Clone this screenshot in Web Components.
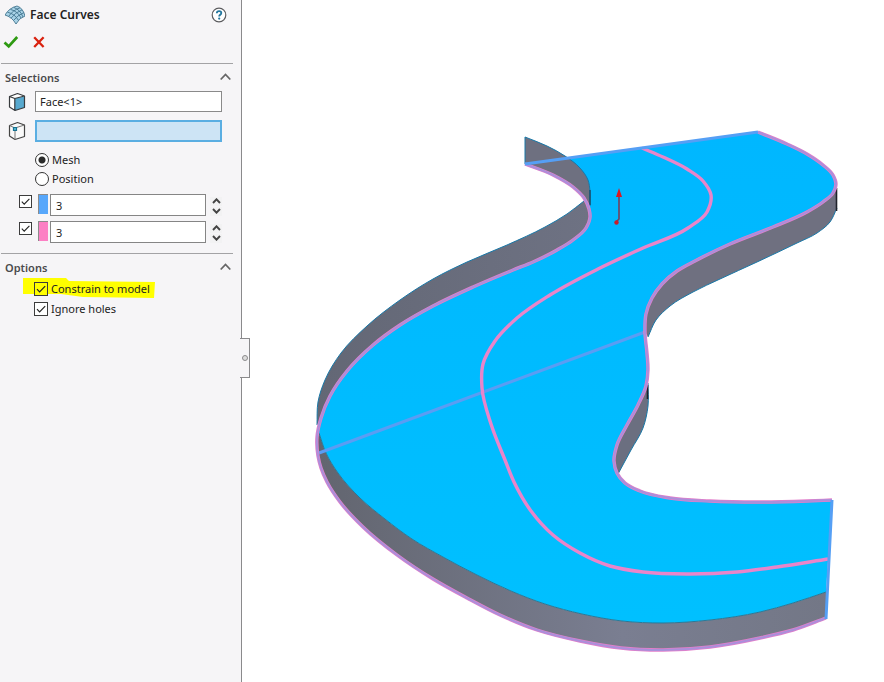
<!DOCTYPE html>
<html lang="en">
<head>
<meta charset="utf-8">
<title>Face Curves</title>
<style>
html,body{margin:0;min-height:100%;background:#fff}
body{font-family:"Noto Sans","Open Sans",sans-serif;font-size:11px;line-height:16px;color:#222}
</style>
</head>
<body>
<cad-app></cad-app>
<script>
const define = (name, html, ready) => customElements.define(name, class extends HTMLElement {
  connectedCallback() {
    if (this.shadowRoot) return;
    const root = this.attachShadow({mode: 'open'});
    const t = document.createElement('template');
    t.innerHTML = html;
    root.append(t.content.cloneNode(true));
    if (ready) ready(this, root);
  }
});

/* Smooth cubic path through a list of x,y pairs, with tangents weighted by chord length */
function curve(text, lead = 'M') {
  const p = text.trim().split(/\s+/).map(s => s.split(',').map(Number));
  const n = p.length, dist = (a, b) => Math.hypot(b[0] - a[0], b[1] - a[1]);
  const slope = (a, b, k) => (b[k] - a[k]) / dist(a, b);
  const tan = p.map((b, i) => [0, 1].map(k => {
    if (i === 0) return slope(b, p[1], k);
    if (i === n - 1) return slope(p[n - 2], b, k);
    const h1 = dist(p[i - 1], b), h2 = dist(b, p[i + 1]);
    return (slope(p[i - 1], b, k) * h2 + slope(b, p[i + 1], k) * h1) / (h1 + h2);
  }));
  let d = lead + p[0].join(',');
  for (let i = 0; i < n - 1; i++) {
    const b = p[i], c = p[i + 1], h = dist(b, c) / 3;
    d += `C${b[0] + tan[i][0] * h},${b[1] + tan[i][1] * h} ${c[0] - tan[i + 1][0] * h},${c[1] - tan[i + 1][1] * h} ${c}`;
  }
  return d;
}
const reversed = t => t.trim().split(/\s+/).reverse().join(' ');

define('check-box', `
<style>
:host{display:block}
label{display:flex;align-items:center;gap:3px}
input{appearance:none;box-sizing:border-box;flex:none;width:var(--size,14px);height:var(--size,14px);margin:0;border:1px solid #3c3c3c;
background:#fff;display:block}
.box{position:relative;display:block}
svg{position:absolute;inset:0;width:100%;height:100%;pointer-events:none;display:none}
input:checked+svg{display:block}
:host([marked]) input{background:#ffff00}
</style>
<label><span class="box"><input type="checkbox" checked><svg viewBox="0 0 14 14"><path d="M3 7.2 5.6 9.8 11.2 4.2" fill="none" stroke="#222" stroke-width="1.2"/></svg></span><slot></slot></label>`,
(el, root) => { if (el.hasAttribute('name')) root.querySelector('input').setAttribute('aria-label', el.getAttribute('name')); });

define('radio-pair', `
<style>
:host{display:block;padding:9px 0 0 35px}
fieldset{border:0;margin:0;padding:0;display:grid;gap:2px}
label{display:flex;align-items:center;gap:3px;height:17px}
input{appearance:none;box-sizing:border-box;width:14px;height:14px;border:1px solid #333;border-radius:50%;background:#fff;margin:0}
input:checked{background:radial-gradient(circle,#2b2b2b 3px,#fff 4px)}
</style>
<fieldset aria-label="Curve definition">
<label><input type="radio" name="m" checked>Mesh</label>
<label><input type="radio" name="m">Position</label>
</fieldset>`);

define('selection-field', `
<style>
:host{display:flex;align-items:center;gap:9px;padding:0 19px 0 8px}
::slotted(svg){flex:none;width:18px;height:20px}
input{box-sizing:border-box;flex:1;min-width:0;width:0;height:21px;margin:0;padding:0 4px;border:1px solid #8a8a8a;border-radius:0;background:#fff;font:inherit;color:inherit;outline:0}
:host([active]) input{background:#cde4f5;border:2px solid #5aaee2;height:22px}
</style>
<slot></slot><input type="text">`,
(el, root) => { const i = root.querySelector('input'); i.value = el.getAttribute('value') || ''; i.setAttribute('aria-label', el.getAttribute('name')); });

define('count-field', `
<style>
:host{display:flex;padding:0 19px 0 19px;height:22px}
check-box{--size:13px;width:13px;padding-top:1px;margin-right:6px}
.swatch{box-sizing:border-box;width:10px;height:20px;border:1px solid #8b8b8b;border-right:0;border-bottom:0;background:var(--swatch);margin-right:2px}
input{box-sizing:border-box;flex:1;width:0;min-width:0;height:22px;margin:0;padding:0 5px;border:1px solid #858585;border-radius:0;background:#fff;font:inherit;color:inherit;outline:0}
.spin{display:grid;width:12px;margin-left:4px;padding-top:2px;gap:1px;align-content:center}
button{display:flex;align-items:center;justify-content:center;border:0;padding:0;margin:0;background:#f2f2f3;height:9px}
svg{width:9px;height:6px}
path{fill:none;stroke:#444;stroke-width:1.9}
</style>
<check-box></check-box><span class="swatch"></span><input type="text" value="3">
<span class="spin"><button aria-label="Increase"><svg viewBox="0 0 9 6"><path d="M1 5 4.5 1.3 8 5"/></svg></button><button aria-label="Decrease"><svg viewBox="0 0 9 6"><path d="M1 1 4.5 4.7 8 1"/></svg></button></span>`,
(el, root) => {
  const n = el.getAttribute('name');
  root.querySelector('input').setAttribute('aria-label', n + ' count');
  root.querySelector('check-box').setAttribute('name', n);
  const inner = root.querySelector('check-box').shadowRoot;
  if (inner) inner.querySelector('input').setAttribute('aria-label', n);
});

define('panel-section', `
<style>
:host{display:block}
hr{border:0;height:1px;background:#a3a3a5;margin:0 8px 0 1px}
header{display:flex;align-items:center;justify-content:space-between;height:26px;padding:0 9px 0 5px}
h2{font:600 11px/16px "Noto Sans","Open Sans",sans-serif;color:#4a4a4c;margin:0;padding-top:2px}
button{border:0;background:none;padding:0;margin:0;display:flex}
svg{width:13px;height:10px}
</style>
<hr><header><h2></h2><button><svg viewBox="0 0 13 10"><path d="M1.7 7.5 6.5 2.5 11.3 7.5" fill="none" stroke="#666" stroke-width="1.8"/></svg></button></header><slot></slot>`,
(el, root) => { root.querySelector('h2').textContent = el.getAttribute('heading'); root.querySelector('button').setAttribute('aria-label', 'Collapse ' + el.getAttribute('heading')); });

define('panel-title', `
<style>
:host{display:block;height:63px}
.row{display:flex;align-items:center;height:30px;padding:0 14px 0 5px}
h1{font:600 12px/16px "Noto Sans","Open Sans",sans-serif;color:#222;margin:0 0 0 5px;flex:1}
.actions{display:flex;gap:13px;padding:5px 3px}
button{border:0;background:none;padding:0;margin:0;display:flex}
</style>
<div class="row">
<svg width="20" height="20" viewBox="0 0 20 20"><path d="M0 10Q4 3 12 1Q18 3 20 11Q14 13 11 19Q7 12 0 10Z" fill="#a9d3e7"/><g fill="none" stroke="#43758f" stroke-width=".9"><path d="M0 10Q4 3 12 1Q18 3 20 11Q14 13 11 19Q7 12 0 10ZM2.5 7.2Q10 9 13.5 15.5M5.5 4.4Q13 6.5 16 13M8.7 2.4Q15 4.5 18 12M3.5 11.6Q8 5 15 2.8M6 13.2Q10 7.5 17.2 4.8M8.5 15.5Q12 10.5 19 7.5"/></g></svg>
<h1>Face Curves</h1>
<button aria-label="Help"><svg width="16" height="16" viewBox="0 0 16 16"><circle cx="8" cy="8" r="6.8" fill="#fff" stroke="#5d5d60" stroke-width="1.2"/><path d="M5.8 6.3Q5.8 4.2 8.1 4.2Q10.3 4.2 10.3 6.1Q10.3 7.2 9.1 7.9Q8.2 8.4 8.2 9.5" fill="none" stroke="#23779f" stroke-width="1.8"/><circle cx="8.2" cy="11.6" r="1.1" fill="#23779f"/></svg></button>
</div>
<div class="actions">
<button aria-label="OK"><svg width="16" height="14" viewBox="0 0 16 14"><path d="M1.5 7.5 5.7 11.3 14.2 2" fill="none" stroke="#2e9a12" stroke-width="2.7"/></svg></button>
<button aria-label="Cancel"><svg width="14" height="14" viewBox="0 0 14 14"><path d="M2.2 2.2 11.6 12M11.6 2.2 2.2 12" fill="none" stroke="#d9210f" stroke-width="2.3"/></svg></button>
</div>`);

define('property-panel', `
<style>
:host{display:block;position:relative;box-sizing:border-box;flex:none;width:242px;background:#f6f5f7;border-right:1px solid #8a8a8c}
.fields{display:grid;gap:8px;padding-top:1px}
.counts{display:grid;gap:5px;padding:7px 0 10px}
.options{display:grid;gap:4px;padding:1px 0 0 34px}
.options check-box{height:16px;position:relative}
.mark{position:absolute;left:-11px;top:-3px;width:133px;height:22px}
.wrap{position:relative}
.tab{position:absolute;left:240px;top:338px;box-sizing:border-box;width:10px;height:40px;border:1px solid #8a8a8c;border-left:0;background:#f6f5f7;padding:0;display:flex;align-items:center;justify-content:center}
.tab i{box-sizing:border-box;width:6px;height:6px;border:1px solid #8a8a8c;border-radius:50%;background:#ddd}
</style>
<panel-title></panel-title>
<panel-section heading="Selections">
<div class="fields">
<selection-field name="Face" value="Face&lt;1&gt;"><svg viewBox="0 0 18 20"><path d="M1.5 4.5 9.5 1.5 16.5 4V15.5L8 18.5 1.5 15Z" fill="#fff"/><path d="M6.8 6.5 16.5 4.5V15.5L6.8 18.5Z" fill="#58a9cf"/><path d="M1.5 4.5 9.5 1.5 16.5 4V15.5L7 18.5 1.5 15ZM1.5 4.5 6.8 6.5 16.5 4M6.8 6.5V18.5" fill="none" stroke="#383b3e" stroke-width="1.2" stroke-linejoin="round"/></svg></selection-field>
<selection-field name="Vertex" active><svg viewBox="0 0 18 20"><path d="M1.5 4.5 9.5 1.5 16.5 4V15.5L7 18.5 1.5 15Z" fill="#fafafa" stroke="#444" stroke-width="1.2" stroke-linejoin="round"/><path d="M1.5 4.5 7 7 16.5 4M7 7V18.5" fill="none" stroke="#777"/><path d="M5.5 6.5h3v3h-3z" fill="#54b8d5" stroke="#18718f" stroke-width="1.2"/></svg></selection-field>
</div>
<radio-pair></radio-pair>
<div class="counts">
<count-field name="Direction 1" style="--swatch:#57a7fb"></count-field>
<count-field name="Direction 2" style="--swatch:#fc80c4"></count-field>
</div>
</panel-section>
<panel-section heading="Options">
<div class="options">
<div class="wrap"><svg class="mark" viewBox="0 0 133 22" aria-hidden="true"><path d="M0 0 43 0 46 3 132 4 131 20 60 19 38 16 0 16Z" fill="#ff0"/></svg><check-box marked>Constrain to model</check-box></div>
<check-box>Ignore holes</check-box>
</div>
</panel-section>
<button class="tab" aria-label="Hide panel"><i></i></button>`);

define('model-view', `
<style>:host{display:block;flex:1;min-width:0;background:#fff}svg{display:block;width:100%;height:auto}</style>
<svg viewBox="242 0 642 682" role="img" aria-label="Curved face with mesh curves"></svg>`,
(el, root) => {
  const left = '525,164 553,175 573,187 584,198 589,209 590,217 586,228 573,240 557,250 533,262 513,270 473,287 433,306 400,325 373,345 347,371 330,396 321,418 317,437 318,456 321,468 327,482 340,502 363,527 397,555 433,579 467,598 500,615 537,630 580,641 621,648 663,650 710,647 760,638 793,630 826,618';
  const right = '758,132 787,144 807,154 823,165 833,175 836,184 833,193 823,202 807,212 773,227 730,244 695,261 677,271 662,284 652,298 646,314 645,332 647,353 648,370 646,386 638,405 627,425 617,445 614,461 617,473 625,483 640,491 670,498 710,501 760,502 807,501 832,500';
  const low = '319,433 326,453 338,473 360,498 385,519 412,539 443,557 477,575 511,591 545,604 582,614 622,621 663,623 710,620 760,612 793,603 826,592';
  const leftUpper = left.split(' ').slice(0, 19).join(' ');
  const leftLower = left.split(' ').slice(18).join(' ');
  const fold = '525,137 547,146 565,156 580,168 588,180 590,191 590,206';
  const wallTop = '584,201 567,214 545,227 507,245 467,262 433,279 400,300 367,326 341,353 325,380 318,402 317,425';
  const wallIn = left.split(' ').slice(3, 18).join(' ');
  const rightWall = '837,208 830,222 817,233 797,243 757,262 720,279 693,292 670,306 656,320 648,337';
  const rightIn = right.split(' ').slice(5, 17).join(' ');
  const innerWall = '648,383 648,406 643,428 631,450 618,474';
  const innerIn = right.split(' ').slice(19, 25).join(' ');
  const mid = '642,148 663,157 687,169 703,181 711,195 707,212 688,228 643,248 598,269 550,295 517,318 495,341 483,364 482,388 491,424 505,460 514,482 531,511 553,535 580,553 610,566 643,572 687,574 737,572 777,567 828,559';
  const edge = '#1878a8';
  const pink = pts => `<path d="${curve(pts)}" fill="none" stroke="#e27fca" stroke-width="3.4"/><path d="${curve(pts)}" fill="none" stroke="#ab8fdb" stroke-width="2"/>`;
  root.querySelector('svg').innerHTML = `
<defs><linearGradient id="g" x1="0" x2="1"><stop stop-color="#62656f"/><stop offset=".6" stop-color="#7a7e91"/><stop offset="1" stop-color="#737786"/></linearGradient>
<linearGradient id="w" x1="0" x2="1"><stop stop-color="#636775"/><stop offset="1" stop-color="#6e7283"/></linearGradient>
<linearGradient id="f" x1="0" y1="0" x2="0" y2="1"><stop stop-color="#00b7ff"/><stop offset="1" stop-color="#00c0ff"/></linearGradient></defs>
<path d="${curve(wallTop)}${curve(reversed(wallIn), 'L')}Z" fill="url(#w)"/><path d="${curve(wallTop)}" fill="none" stroke="${edge}"/>
<path d="${curve(rightWall)}${curve(reversed(rightIn), 'L')}Z" fill="#6f7080"/><path d="${curve(rightWall)}" fill="none" stroke="${edge}"/>
<path d="${curve(innerWall)}${curve(reversed(innerIn), 'L')}Z" fill="#6b6f80"/><path d="${curve(innerWall)}" fill="none" stroke="${edge}"/>
<path d="${curve(leftUpper)}${curve(low, 'L')}L832,500${curve(reversed(right), 'L')}Z" fill="url(#f)"/>
<path d="${curve(fold)}${curve('590,206 584,198 573,187 553,175 525,164', 'L')}Z" fill="#6e7080"/>
<path d="M525,164V137${curve(fold, 'L')}" fill="none" stroke="${edge}"/>
<path d="${curve(leftLower)}${curve(reversed(low), 'L')}Z" fill="url(#g)"/><path d="${curve(low)}" fill="none" stroke="#287998"/>
<path d="M590,190V205" stroke="#175375" stroke-width="1.6"/><path d="M836.5,188V211M647.5,385V399" stroke="#20222b" stroke-width="1.6"/>
<path d="M319,453 645,332" stroke="#5a9df3" stroke-width="3"/>
${pink(left)}${pink(right)}
<path d="${curve(mid)}" fill="none" stroke="#e985ca" stroke-width="3.4"/>
<path d="M525,164 758,132M832,500 826,619" fill="none" stroke="#559ff5" stroke-width="3"/>
<path d="M619,194V219L616,222" fill="none" stroke="#76405d" stroke-width="1.6"/><path d="M619,188 622,197H616Z" fill="#dd1721"/><circle cx="616.5" cy="222.5" r="2.2" fill="#c81d2a"/>`;
});

define('cad-app', `
<style>:host{display:flex;min-height:100vh;align-items:stretch}property-panel{z-index:1}</style>
<property-panel></property-panel><model-view></model-view>`);
</script>
</body>
</html>
